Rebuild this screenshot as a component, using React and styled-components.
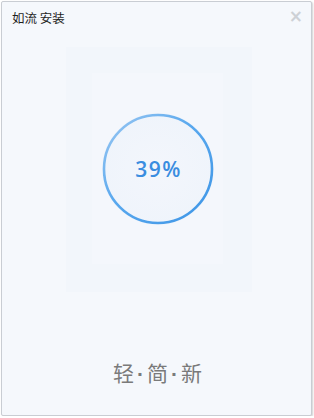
import React from "react";
import styled, { createGlobalStyle } from "styled-components";

const Global = createGlobalStyle`
  html, body { margin: 0; padding: 0; background: #ffffff; }
  body { font-family: "Noto Sans CJK SC", "Noto Sans", sans-serif; }
`;

const Window = styled.div`
  box-sizing: border-box;
  width: 311px;
  height: 415px;
  margin: 1px 0 0 1px;
  border: 1px solid #c9cdd3;
  border-radius: 2px;
  background: #f5f8fc;
  box-shadow: 1px 1px 2px rgba(0, 0, 0, 0.18);
  display: flex;
  flex-direction: column;
  overflow: hidden;
`;

const TitleBar = styled.div`
  height: 35px;
  display: flex;
  align-items: center;
  justify-content: space-between;
  padding: 0 8px 0 10px;
  flex-shrink: 0;
`;

const Title = styled.span`
  font-size: 12.5px;
  color: #1f1f1f;
  margin-top: -4px;
`;

const Close = styled.span`
  font-family: "DejaVu Sans", sans-serif;
  font-size: 17px;
  font-weight: bold;
  line-height: 1;
  color: #cdd1d6;
  margin-top: -6px;
`;

const Stage = styled.div`
  display: flex;
  justify-content: center;
  padding-left: 5px;
  margin-top: 10px;
`;

const OuterPanel = styled.div`
  width: 186px;
  height: 245px;
  background: #f2f6fb;
  display: flex;
  align-items: center;
  justify-content: center;
`;

const InnerPanel = styled.div`
  width: 131px;
  height: 191px;
  margin-left: -3px;
  margin-top: -2px;
  background: #f4f7fc;
  display: flex;
  align-items: center;
  justify-content: center;
`;

const Ring = styled.div`
  position: relative;
  width: 112px;
  height: 112px;
  display: flex;
  align-items: center;
  justify-content: center;
  border-radius: 50%;
  background: radial-gradient(circle at 50% 50%, #f3f6fc 0%, #eff4fb 75%, #f4f7fc 100%);
`;

const RingSvg = styled.svg`
  position: absolute;
  inset: 0;
`;

const Percent = styled.span`
  position: relative;
  font-family: "Open Sans", "Noto Sans", sans-serif;
  font-size: 21px;
  font-weight: 600;
  letter-spacing: 1.5px;
  color: #3a8de0;
  margin-left: 2px;
`;

const Slogan = styled.div`
  margin-top: 65px;
  text-align: center;
  font-size: 21px;
  color: #7a7a7a;
  padding-left: 2px;
`;

const Dot = styled.span`
  font-family: "Liberation Sans", sans-serif;
  font-weight: bold;
  margin: 0 3px;
`;

export default function App() {
  return (
    <>
      <Global />
      <Window>
        <TitleBar>
          <Title>如流 安装</Title>
          <Close>×</Close>
        </TitleBar>
        <Stage>
          <OuterPanel>
            <InnerPanel>
              <Ring>
                <RingSvg width="112" height="112" viewBox="0 0 112 112">
                  <defs>
                    <linearGradient id="rg" x1="0" y1="0" x2="1" y2="1">
                      <stop offset="0%" stopColor="#9cc8f2" />
                      <stop offset="45%" stopColor="#59a8ee" />
                      <stop offset="100%" stopColor="#3d95e6" />
                    </linearGradient>
                  </defs>
                  <circle cx="56" cy="56" r="54" fill="none" stroke="url(#rg)" strokeWidth="2.6" />
                </RingSvg>
                <Percent>39%</Percent>
              </Ring>
            </InnerPanel>
          </OuterPanel>
        </Stage>
        <Slogan>
          轻<Dot>·</Dot>简<Dot>·</Dot>新
        </Slogan>
      </Window>
    </>
  );
}
